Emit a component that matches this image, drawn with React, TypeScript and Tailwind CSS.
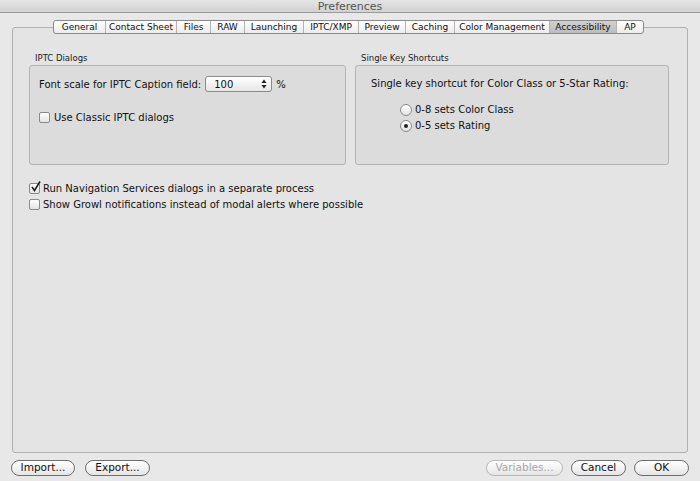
import React from "react";

const tabs = [
  ["General", 51],
  ["Contact Sheet", 71],
  ["Files", 34],
  ["RAW", 34],
  ["Launching", 59],
  ["IPTC/XMP", 55],
  ["Preview", 47],
  ["Caching", 49],
  ["Color Management", 95],
  ["Accessibility", 67],
  ["AP", 27],
] as const;

function Checkbox({ checked }: { checked?: boolean }) {
  return (
    <span className="relative inline-block w-[11px] h-[11px] border border-[#8a8a8a] rounded-[2px] bg-gradient-to-b from-[#ffffff] to-[#e4e4e4] shrink-0">
      {checked && (
        <svg viewBox="0 0 12 12" className="absolute left-[0px] top-[-3px] w-[12px] h-[12px] overflow-visible">
          <path d="M2 6 L4.5 9.5 L10 0.5" stroke="#222" strokeWidth="1.6" fill="none" />
        </svg>
      )}
    </span>
  );
}

function Radio({ checked }: { checked?: boolean }) {
  return (
    <span className="relative inline-flex items-center justify-center w-[12px] h-[12px] border border-[#8a8a8a] rounded-full bg-gradient-to-b from-[#ffffff] to-[#e4e4e4] shrink-0">
      {checked && <span className="w-[4px] h-[4px] rounded-full bg-[#222]" />}
    </span>
  );
}

function Button({ children, disabled, w }: { children: React.ReactNode; disabled?: boolean; w: string }) {
  return (
    <div
      className={`${w} h-[16px] flex items-center justify-center rounded-full border ${
        disabled ? "border-[#b8b8b8] text-[#a8a8a8]" : "border-[#6e6e6e] text-[#111]"
      } bg-gradient-to-b from-[#ffffff] to-[#e6e6e6] text-[10.5px]`}
    >
      {children}
    </div>
  );
}

export default function App() {
  return (
    <div
      className="w-[700px] h-[481px] bg-[#e8e8e8] flex flex-col text-[#111] overflow-hidden"
      style={{ fontFamily: '"DejaVu Sans", "Liberation Sans", sans-serif' }}
    >
      {/* Title bar */}
      <div className="h-[13px] bg-gradient-to-b from-[#e4e4e4] to-[#d2d2d2] border-b border-[#9a9a9a] flex items-center justify-center text-[11px] text-[#555] leading-none shrink-0">
        Preferences
      </div>

      <div className="flex-1 flex flex-col px-[12px] pt-[7px]">
        {/* Tabs + pane */}
        <div className="relative">
          <div className="absolute left-[41px] top-0 h-[14px] flex border border-[#8a8a8a] rounded-[3px] bg-gradient-to-b from-[#ffffff] to-[#ececec] z-10 overflow-hidden">
            {tabs.map(([t, w], i) => (
              <div
                key={t}
                style={{ width: w }}
                className={`h-full flex items-center justify-center text-[9px] leading-none ${
                  i > 0 ? "border-l border-[#b4b4b4]" : ""
                } ${t === "Accessibility" ? "bg-gradient-to-b from-[#d0d0d0] to-[#bdbdbd]" : ""}`}
              >
                {t}
              </div>
            ))}
          </div>
        </div>
        <div className="mt-[7px] h-[426px] border border-[#b0b0b0] rounded-[3px] bg-[#e4e4e4] pl-[16px] pr-[18px] pt-[26px]">
          <div className="flex gap-[9px]">
            {/* IPTC Dialogs */}
            <div className="w-[317px] flex flex-col">
              <div className="text-[8.5px] text-[#222] pl-[6px] h-[11px] leading-none">IPTC Dialogs</div>
              <div className="h-[100px] border border-[#b4b4b4] rounded-[3px] bg-[#dcdcdc] pl-[9px] pt-[10px]">
                <div className="flex items-center text-[10px]">
                  <span>Font scale for IPTC Caption field:</span>
                  <div className="ml-[4px] w-[67px] h-[16px] border border-[#8a8a8a] rounded-[3px] bg-gradient-to-b from-[#ffffff] to-[#e6e6e6] flex items-center justify-between pl-[8px] pr-[4px]">
                    <span>100</span>
                    <svg width="6" height="10" viewBox="0 0 6 10">
                      <path d="M3 0.5 L5.5 4 L0.5 4 Z" fill="#222" />
                      <path d="M3 9.5 L5.5 6 L0.5 6 Z" fill="#222" />
                    </svg>
                  </div>
                  <span className="ml-[4px]">%</span>
                </div>
                <div className="flex items-center gap-[4px] mt-[18px] text-[10px]">
                  <Checkbox />
                  <span>Use Classic IPTC dialogs</span>
                </div>
              </div>
            </div>
            {/* Single Key Shortcuts */}
            <div className="w-[314px] flex flex-col">
              <div className="text-[8.5px] text-[#222] pl-[6px] h-[11px] leading-none">Single Key Shortcuts</div>
              <div className="h-[100px] border border-[#b4b4b4] rounded-[3px] bg-[#dcdcdc] pl-[15px] pt-[10px] text-[10px]">
                <div>Single key shortcut for Color Class or 5-Star Rating:</div>
                <div className="pl-[29px] mt-[11px] flex flex-col gap-[1px]">
                  <div className="flex items-center gap-[3px]">
                    <Radio />
                    <span>0-8 sets Color Class</span>
                  </div>
                  <div className="flex items-center gap-[3px]">
                    <Radio checked />
                    <span>0-5 sets Rating</span>
                  </div>
                </div>
              </div>
            </div>
          </div>
          <div className="mt-[16px] flex flex-col gap-[1px] text-[10px]">
            <div className="flex items-center gap-[3px]">
              <Checkbox checked />
              <span>Run Navigation Services dialogs in a separate process</span>
            </div>
            <div className="flex items-center gap-[3px]">
              <Checkbox />
              <span>Show Growl notifications instead of modal alerts where possible</span>
            </div>
          </div>
        </div>

        {/* Buttons */}
        <div className="mt-[7px] -mx-[1px] flex items-center">
          <Button w="w-[64px]">Import...</Button>
          <div className="ml-[10px]">
            <Button w="w-[65px]">Export...</Button>
          </div>
          <div className="ml-auto flex gap-[8px]">
            <Button w="w-[77px]" disabled>Variables...</Button>
            <Button w="w-[55px]">Cancel</Button>
            <Button w="w-[55px]">OK</Button>
          </div>
        </div>
      </div>
    </div>
  );
}
